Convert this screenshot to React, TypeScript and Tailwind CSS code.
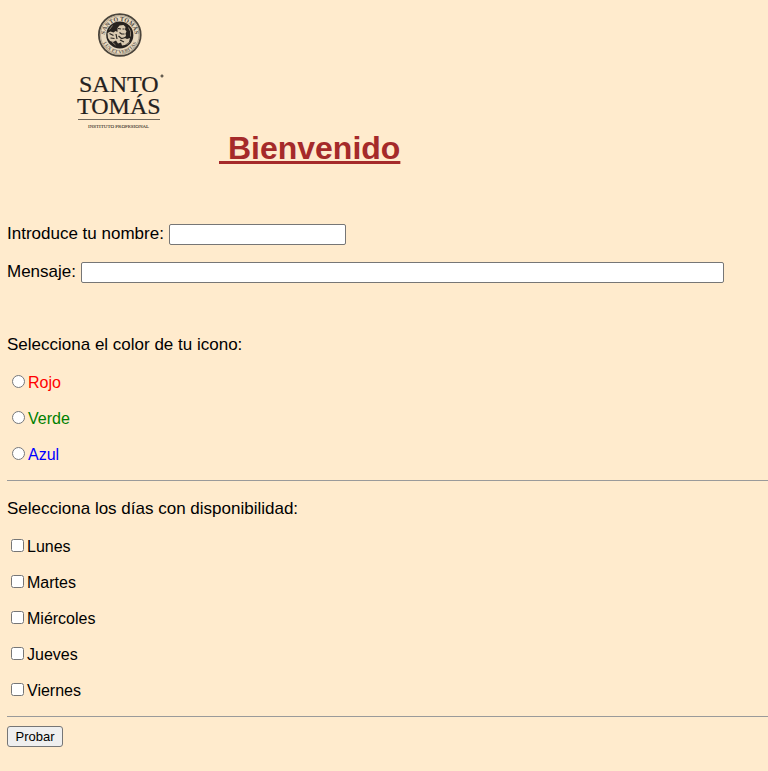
import { useState } from 'react';

const colors = [
  { id: 'rojo', label: 'Rojo', tone: 'text-[#ff0000]' },
  { id: 'verde', label: 'Verde', tone: 'text-[#008000]' },
  { id: 'azul', label: 'Azul', tone: 'text-[#0000ff]' },
];

const days = ['Lunes', 'Martes', 'Miércoles', 'Jueves', 'Viernes'];

const serif = '"Liberation Serif", "Times New Roman", serif';

function Logo() {
  return (
    <svg
      className="h-[166px] w-[212px] shrink-0"
      viewBox="7 0 212 166"
      role="img"
      aria-label="Santo Tomás Instituto Profesional"
    >
      <defs>
        <path id="sealTop" d="M104.8 36a15 15 0 0 1 30 0" />
        <path id="sealBottom" d="M101.300 35a18.500 18.500 0 0 0 37 0" />
      </defs>
      <circle cx="119.800" cy="35" r="20.900" fill="#e9dac0" stroke="#4a443b" strokeWidth="1.800" />
      <circle cx="119.800" cy="35" r="19.300" fill="none" stroke="#8d8270" strokeWidth="0.600" />
      <circle cx="119.800" cy="35" r="13.600" fill="#27231f" />
      <text fontFamily={serif} fontSize="6" fontWeight="700" fill="#4b453c" textAnchor="middle">
        <textPath href="#sealTop" startOffset="50%">SANTO TOMÁS</textPath>
      </text>
      <text fontFamily={serif} fontSize="5" fontWeight="700" fill="#6b6356" textAnchor="middle">
        <textPath href="#sealBottom" startOffset="50%">LUX ET VERITAS</textPath>
      </text>
      <path
        d="M107.500 33l3-1.500 3 1 2-1.500 2 1v-4l2-2.500 4-.5 2 2-.5 2.500 1.500 2-1 2 .5 2.500-2 1.500 3 1.500 3-1-1 4-4 3-3 .5-1-3-3 1-2-3-3 1.500-3-1-2-3z"
        fill="#d9cab0"
      />
      <path
        d="M118 28.500l3 .5m1.500 0h2m-5 3.500 2 1.500h3m-6 2 3 2.500 4-1m-16-4 4 2m-3 2.500 4 .5m1.500-4.500 1 5m3 1 4 2"
        fill="none"
        stroke="#2b2722"
        strokeWidth="1.200"
      />
      <path d="M128.500 27.500l2 4v5m-21-7 3-4m-1 16 4 3.500m11 0 3-3" fill="none" stroke="#8f8371" strokeWidth="1" />
      <text fontFamily={serif} fontSize="24" fill="#242120" stroke="#242120" strokeWidth="0.200">
        <tspan x="79" y="92">SANTO</tspan>
        <tspan x="77" y="114">TOMÁS</tspan>
      </text>
      <circle cx="162" cy="76" r="1.200" fill="#776d60" stroke="#4a443b" strokeWidth="0.600" />
      <path d="M78 119.500h82" stroke="#70685b" strokeWidth="1" />
      <text x="88" y="128" fontFamily={serif} fontSize="5" fill="#3f3931" stroke="#3f3931" strokeWidth="0.100">
        INSTITUTO PROFESIONAL
      </text>
    </svg>
  );
}

export default function App() {
  const [color, setColor] = useState('');

  return (
    <div className="min-h-screen bg-[#ffebcd] pb-6 pl-[7px] font-['Liberation_Sans',Arial,sans-serif] text-base leading-5 text-black">
      <header className="flex items-end">
        <Logo />
        <h1 className="whitespace-pre text-[32px] leading-9 font-bold text-[#a52a2a] underline">
          {'\u00a0Bienvenido'}
        </h1>
      </header>

      <form onSubmit={(event) => event.preventDefault()}>
        <div className="mt-[58px] flex flex-col gap-4 text-[17px]">
          <div className="flex h-[22px] items-start gap-[5px]">
            <label htmlFor="nombre">Introduce tu nombre:</label>
            <input
              id="nombre"
              type="text"
              className="h-[21px] w-[177px] rounded-[2px] border border-[#767676] bg-white px-0.5 text-[13px]"
            />
          </div>
          <div className="flex h-[22px] items-start gap-[5px]">
            <label htmlFor="mensaje">Mensaje:</label>
            <input
              id="mensaje"
              type="text"
              className="mr-11 h-[21px] min-w-0 flex-1 rounded-[2px] border border-[#767676] bg-white px-0.5 text-[13px]"
            />
          </div>
        </div>

        <fieldset className="mt-[51px] flex flex-col gap-4">
          <legend className="mb-[18px] text-[17px]">Selecciona el color de tu icono:</legend>
          {colors.map(({ id, label, tone }) => (
            <div key={id} className={`flex items-center ${tone}`}>
              <input
                id={id}
                type="radio"
                name="color"
                value={id}
                checked={color === id}
                onChange={() => setColor(id)}
                className="mr-[3px] mb-1 ml-[5px] size-[13px]"
              />
              <label htmlFor={id}>{label}</label>
            </div>
          ))}
        </fieldset>

        <hr className="mt-[15px] border-t border-[#9a9a9a]" />

        <fieldset className="mt-[18px] flex flex-col gap-4">
          <legend className="mb-[18px] text-[17px]">Selecciona los días con disponibilidad:</legend>
          {days.map((day) => (
            <div key={day} className="flex items-center">
              <input id={day} type="checkbox" name="dias" value={day} className="mr-[3px] mb-1 ml-1 size-[13px]" />
              <label htmlFor={day}>{day}</label>
            </div>
          ))}
        </fieldset>

        <hr className="mt-[15px] border-t border-[#9a9a9a]" />

        <button
          type="submit"
          className="mt-[9px] block h-[21px] w-14 rounded-[3px] border border-[#767676] bg-[#efefef] text-[13px] leading-4"
        >
          Probar
        </button>
      </form>
    </div>
  );
}
